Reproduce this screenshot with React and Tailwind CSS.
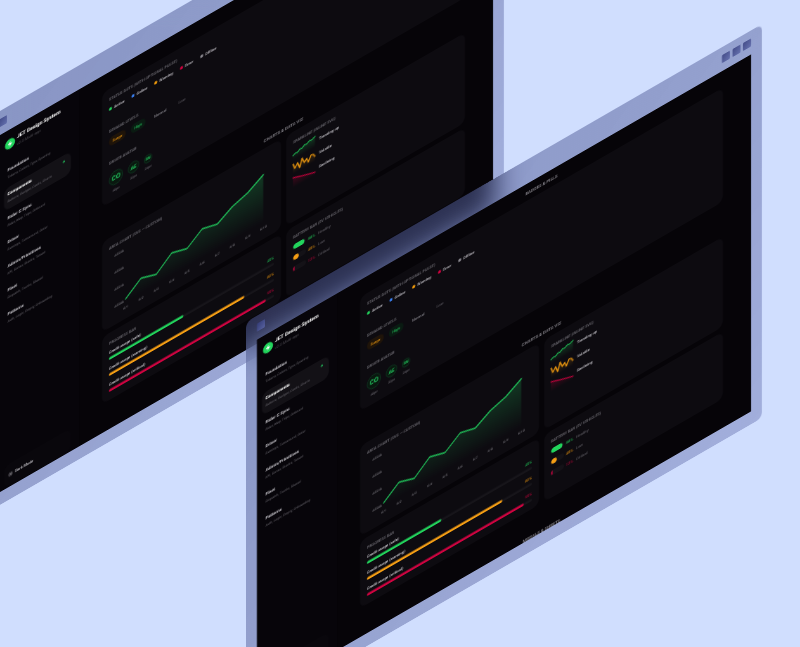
import { useId } from "react";
import { Zap, Sun } from "lucide-react";

const navItems = [
  { title: "Foundation", detail: "Tokens, Colors, Type, Spacing" },
  { title: "Components", detail: "Buttons, Badges, Cards, Charts", active: true },
  { title: "Rider C Sync", detail: "Rider, Map, Trips, Onboard" },
  { title: "Driver", detail: "Earnings, Turnaround, Order" },
  { title: "Admin/Primitives", detail: "KPI, Dense, Stacks, Tenant" },
  { title: "Fleet", detail: "Dispatch, Trucks, Shared" },
  { title: "Patterns", detail: "Auth, Login, Empty, Onboarding" },
];

const statuses = [
  { label: "Active", dot: "bg-[#22d45c]" },
  { label: "Online", dot: "bg-[#3b82f6]" },
  { label: "Warning", dot: "bg-[#f59e0b]" },
  { label: "Error", dot: "bg-[#d3003f]" },
  { label: "Offline", dot: "bg-[#8b8990]" },
];

const demand = [
  { label: "Surge", tone: "bg-[#1f1409] text-[#e0900f]" },
  { label: "High", tone: "bg-[#0a1b12] text-[#1fb354]" },
  { label: "Normal", tone: "text-[#85838a]" },
  { label: "Low", tone: "text-[#56545b]" },
];

const avatars = [
  { initials: "CO", size: "size-14 text-[26px]", caption: "48px" },
  { initials: "AE", size: "size-11 text-[20px]", caption: "32px" },
  { initials: "SN", size: "size-8 text-[15px]", caption: "24px" },
];

const chartPoints = [
  [67, 213], [128, 166], [189, 186], [251, 136], [312, 154],
  [373, 110], [433, 126], [493, 91], [555, 71], [617, 35],
];

const usage = [
  { label: "Credit usage (safe)", value: 45, bar: "bg-[#22d45c]", text: "text-[#1fae4f]" },
  { label: "Credit usage (warning)", value: 82, bar: "bg-[#f59e14]", text: "text-[#d0850f]" },
  { label: "Credit usage (critical)", value: 95, bar: "bg-[#cf0340]", text: "text-[#a80636]" },
];

const sparks = [
  { label: "Trending up", color: "#1fae4f", points: "0,27 10,22 18,24 28,16 36,18 46,10 54,12 66,5 74,7 88,1" },
  { label: "Volatile", color: "#e0900f", points: "0,6 8,26 18,10 27,34 36,2 46,24 54,14 62,32 72,10 80,12 88,24" },
  { label: "Declining", color: "#c4033c", points: "0,4 16,9 32,15 48,20 64,25 88,32" },
];

const batteries = [
  { value: 88, note: "Healthy", bar: "bg-[#22d45c]", text: "text-[#1fae4f]" },
  { value: 45, note: "Low", bar: "bg-[#f59e14]", text: "text-[#d0850f]" },
  { value: 12, note: "Critical", bar: "bg-[#cf0340]", text: "text-[#a80636]" },
];

function CardLabel({ children, className = "" }) {
  return <h3 className={`text-[15px] leading-5 font-medium text-[#737178] ${className}`}>{children}</h3>;
}

function Card({ title, children }) {
  return (
    <section className="rounded-3xl bg-[#0d0b10] px-7 py-8">
      <CardLabel>{title}</CardLabel>
      {children}
    </section>
  );
}

function SectionHeading({ children, className = "" }) {
  return (
    <h2 className={`mb-5 text-center text-[17px] leading-5 font-medium text-[#8b8990] ${className}`}>
      {children}
    </h2>
  );
}

function AreaChart() {
  const fill = useId();
  const line = chartPoints.map((p) => p.join(",")).join(" ");
  return (
    <svg viewBox="0 0 660 260" className="mt-4 block w-full" role="img" aria-label="Area chart">
      <defs>
        <linearGradient id={fill} x1="0" y1="0" x2="0" y2="1">
          <stop offset="0" stopColor="#22c55e" stopOpacity="0.24" />
          <stop offset="1" stopColor="#22c55e" stopOpacity="0" />
        </linearGradient>
      </defs>
      <polygon points={`67,226 ${line} 617,226`} fill={`url(#${fill})`} />
      <polyline points={line} fill="none" stroke="#1fb354" strokeWidth="6" strokeLinejoin="round" strokeLinecap="round" />
      <g fill="#737178" fontSize="13" fontWeight="500">
        {["AED3k", "AED2k", "AED1k", "AED0k"].map((t, i) => (
          <text key={t} x="60" y={20 + i * 68} textAnchor="end">{t}</text>
        ))}
        {chartPoints.map(([x], i) => (
          <text key={x} x={x} y="252" textAnchor="middle">{`6/${i + 1}`}</text>
        ))}
      </g>
    </svg>
  );
}

function Sparkline({ points, color }) {
  const fill = useId();
  return (
    <svg viewBox="0 0 88 36" className="h-9 w-22 overflow-visible" aria-hidden="true">
      <defs>
        <linearGradient id={fill} x1="0" y1="0" x2="0" y2="1">
          <stop offset="0" stopColor={color} stopOpacity="0.25" />
          <stop offset="1" stopColor={color} stopOpacity="0" />
        </linearGradient>
      </defs>
      <polygon points={`0,44 ${points} 88,44`} fill={`url(#${fill})`} />
      <polyline points={points} fill="none" stroke={color} strokeWidth="5" strokeLinejoin="round" strokeLinecap="round" />
    </svg>
  );
}

function Sidebar() {
  return (
    <aside className="flex w-80 shrink-0 flex-col bg-[#07050a] pt-8 pr-8 pb-1 pl-5">
      <div className="flex items-center gap-2 pl-1">
        <span className="grid size-10 place-items-center rounded-full bg-[#22d45c] text-white">
          <Zap className="size-5 fill-white" />
        </span>
        <div>
          <h1 className="text-[20px] leading-6 font-bold text-white">JET Design System</h1>
          <p className="mt-2 text-[15px] leading-5 text-[#4d4b52]">v2.0 Multi-app</p>
        </div>
      </div>
      <nav className="mt-12 flex flex-col gap-2">
        {navItems.map((item) => (
          <a
            key={item.title}
            href="#"
            className={`block h-22 rounded-3xl py-4 pr-6 pl-3.5 ${item.active ? "bg-[#131116]" : ""}`}
          >
            <span className="flex items-center justify-between">
              <span className={`text-[17px] leading-5 font-bold ${item.active ? "text-white" : "text-[#c4c2c8]"}`}>
                {item.title}
              </span>
              {item.active && <span className="size-2 rounded-full bg-[#22c55e]" />}
            </span>
            <span className="mt-3 block text-[13px] leading-5 text-[#66646b]">{item.detail}</span>
          </a>
        ))}
      </nav>
      <button className="mt-auto flex h-22 items-center gap-2 rounded-3xl bg-[#09070c] pl-4 text-[15px] font-medium text-[#c4c2c8]">
        <Sun className="size-5" />
        Dark Mode
      </button>
    </aside>
  );
}

function Screen() {
  return (
    <div className="flex min-h-0 flex-1 overflow-hidden bg-[#060408] font-[Roboto,'Liberation_Sans',sans-serif] [text-rendering:geometricPrecision]">
      <Sidebar />
      <main className="min-w-0 flex-1 pt-7 pr-28 pl-23">
        <SectionHeading>BADGES &amp; PILLS</SectionHeading>
        <Card title="STATUS DOTS (WITH OPTIONAL PULSE)">
          <ul className="mt-5 flex gap-7 text-[15px] leading-5 font-medium text-[#c4c2c8]">
            {statuses.map((s) => (
              <li key={s.label} className="flex items-center gap-2">
                <span className={`size-3 rounded-full ${s.dot}`} />
                {s.label}
              </li>
            ))}
          </ul>
          <CardLabel className="mt-17">DEMAND LEVELS</CardLabel>
          <div className="mt-4 flex gap-5 text-[15px] leading-5 font-medium">
            {demand.map((d) => (
              <span key={d.label} className={`rounded-full px-3.5 py-2 ${d.tone}`}>{d.label}</span>
            ))}
          </div>
          <CardLabel className="mt-14">DRIVER AVATAR</CardLabel>
          <div className="mt-8 flex items-center gap-5">
            {avatars.map((a) => (
              <figure key={a.initials} className="flex flex-col items-center gap-3">
                <span className={`grid place-items-center rounded-full border-2 border-[#11492a] bg-[#09180f] font-bold text-[#22c55e] ${a.size}`}>
                  {a.initials}
                </span>
                <figcaption className="text-[13px] leading-4 text-[#737178]">{a.caption}</figcaption>
              </figure>
            ))}
          </div>
        </Card>

        <SectionHeading className="mt-25">CHARTS &amp; DATA VIZ</SectionHeading>
        <div className="grid grid-cols-2 gap-5">
          <Card title="AREA CHART (SVG — CUSTOM)">
            <AreaChart />
          </Card>
          <Card title="SPARKLINE (INLINE SVG)">
            <ul className="mt-4 flex flex-col gap-5">
              {sparks.map((s) => (
                <li key={s.label} className="flex items-center gap-4 text-[15px] leading-5 font-medium text-[#c4c2c8]">
                  <Sparkline points={s.points} color={s.color} />
                  {s.label}
                </li>
              ))}
            </ul>
          </Card>
          <Card title="PROGRESS BAR">
            <div className="mt-5 flex flex-col gap-7">
              {usage.map((u) => (
                <div key={u.label}>
                  <div className="flex justify-between text-[15px] leading-4 font-medium">
                    <span className="text-[#d2d0d6]">{u.label}</span>
                    <span className={u.text}>{u.value}%</span>
                  </div>
                  <div className="mt-2.5 h-2.5 rounded-full bg-[#17151a]">
                    <div className={`h-full rounded-full ${u.bar}`} style={{ width: `${u.value}%` }} />
                  </div>
                </div>
              ))}
            </div>
          </Card>
          <Card title="BATTERY BAR (EV VEHICLES)">
            <ul className="mt-5 flex flex-col gap-6">
              {batteries.map((b) => (
                <li key={b.note} className="flex items-center text-[15px] leading-5 font-medium">
                  <span className="h-5 w-13 overflow-hidden rounded-full bg-[#141217]">
                    <span className={`block h-full rounded-full ${b.bar}`} style={{ width: `${b.value}%` }} />
                  </span>
                  <span className={`w-12 pl-2 ${b.text}`}>{b.value}%</span>
                  <span className="font-normal text-[#66646b]">{b.note}</span>
                </li>
              ))}
            </ul>
          </Card>
        </div>

        <SectionHeading className="mt-25">MODALS &amp; SHEETS</SectionHeading>
      </main>
    </div>
  );
}

function FrameSquare({ className = "" }) {
  return <span className={`size-8 rounded-sm bg-linear-to-br from-[#353d7c]/85 to-[#5c67a8]/85 ${className}`} />;
}

function Window({ className }) {
  return (
    <div
      className={`absolute flex h-[1576px] w-[2064px] origin-top-left scale-25 [transform:skewY(-30deg)] flex-col rounded-3xl bg-linear-to-br from-[#48548f]/53 to-[#6670b0]/44 px-11 pb-13 backdrop-blur-[48px] ${className}`}
    >
      <div className="flex h-24 shrink-0 items-center gap-2.5">
        <FrameSquare className="mr-auto" />
        <FrameSquare />
        <FrameSquare />
        <FrameSquare />
      </div>
      <Screen />
    </div>
  );
}

export default function App() {
  return (
    <div className="relative h-screen w-full overflow-hidden bg-[#d0defe]">
      <Window className="top-[118px] -left-3" />
      <Window className="top-[322px] left-[246px]" />
    </div>
  );
}
